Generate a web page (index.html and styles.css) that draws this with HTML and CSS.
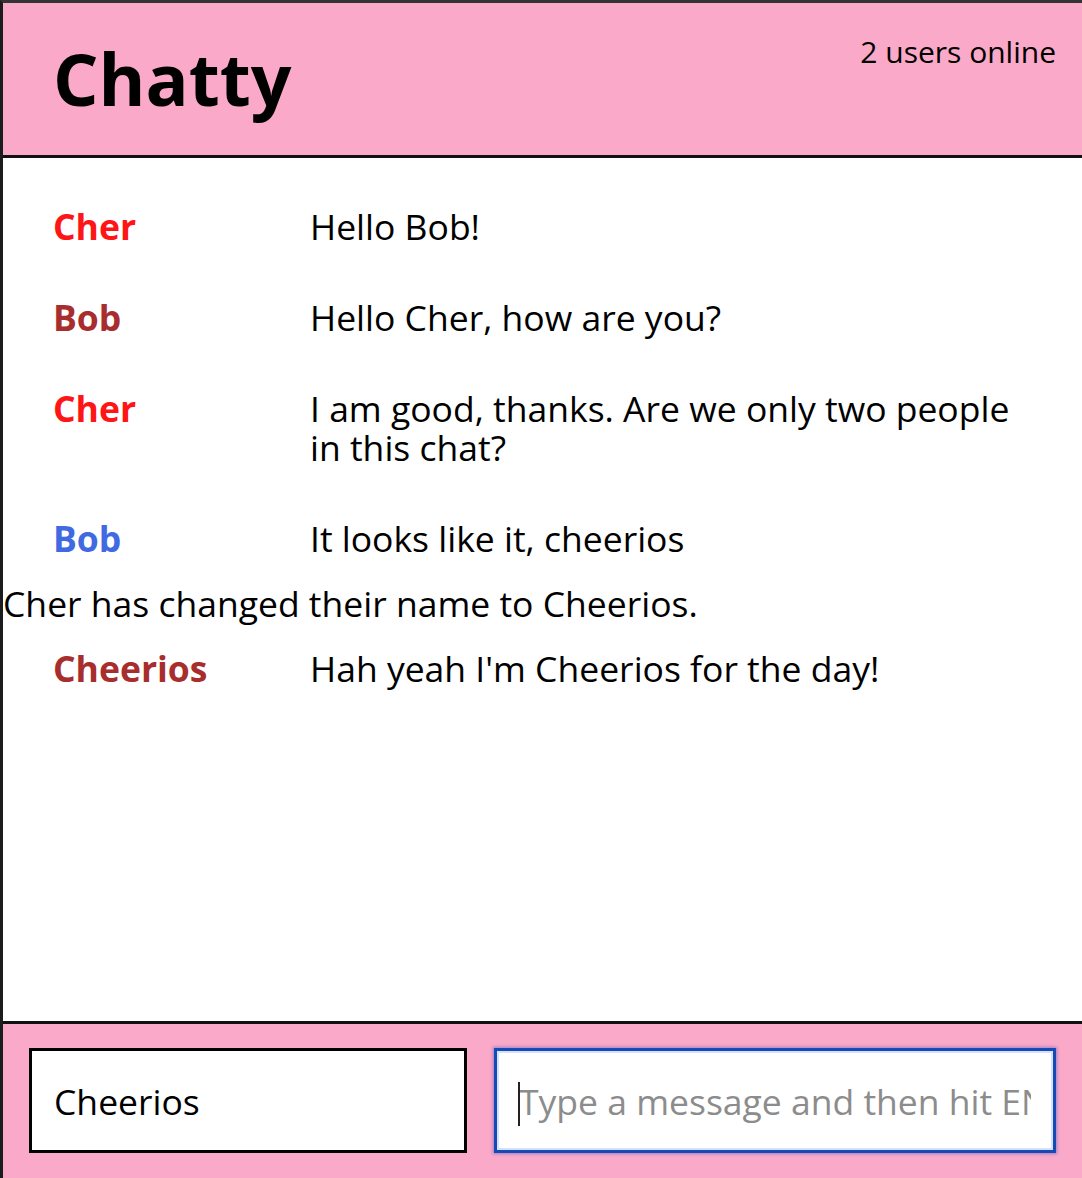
FILE: index.html
```html
<!DOCTYPE html>
<html lang="en">
<head>
<meta charset="utf-8">
<title>Chatty</title>
<link rel="stylesheet" href="styles.css">
</head>
<body>
<div class="app">
  <header class="navbar">
    <h1 class="brand">Chatty</h1>
    <span class="online">2 users online</span>
  </header>
  <main class="messages">
    <div class="message">
      <span class="username red">Cher</span>
      <span class="content">Hello Bob!</span>
    </div>
    <div class="message">
      <span class="username brown">Bob</span>
      <span class="content">Hello Cher, how are you?</span>
    </div>
    <div class="message">
      <span class="username red">Cher</span>
      <span class="content">I am good, thanks. Are we only two people in this chat?</span>
    </div>
    <div class="message">
      <span class="username blue">Bob</span>
      <span class="content">It looks like it, cheerios</span>
    </div>
    <div class="system">Cher has changed their name to Cheerios.</div>
    <div class="message">
      <span class="username brown">Cheerios</span>
      <span class="content">Hah yeah I'm Cheerios for the day!</span>
    </div>
  </main>
  <footer class="chatbar">
    <input class="chatbar-username" type="text" value="Cheerios">
    <span class="msg-wrap"><input class="chatbar-message" type="text" placeholder="Type a message and then hit ENTER"></span>
  </footer>
</div>
</body>
</html>
```
FILE: styles.css
```css
* { box-sizing: border-box; }
html, body { margin: 0; padding: 0; background: #fff; }
body { font-family: "Open Sans", "Liberation Sans", sans-serif; color: #000; }

.app {
  height: 1178px;
  display: flex;
  flex-direction: column;
  border-top: 3px solid #333;
  border-left: 3px solid #1c1c1c;
}

.navbar {
  height: 155px;
  flex: 0 0 155px;
  background: #faa9c9;
  border-bottom: 3px solid #111;
  display: flex;
  justify-content: space-between;
  align-items: center;
  padding: 0 26px 0 50px;
}
.brand {
  margin: 0;
  font-size: 71.5px;
  line-height: 74px;
  font-weight: 700;
}
.online {
  align-self: flex-start;
  padding-top: 29px;
  font-size: 30px;
  line-height: 1.362;
}

.messages {
  flex: 1;
  padding-top: 23px;
  overflow: hidden;
}
.message {
  display: flex;
  padding: 26px 45px 26px 50px;
  font-size: 35.5px;
  line-height: 39px;
}
.username {
  flex: 0 0 257px;
  font-weight: 700;
}
.content { flex: 1; }
.red { color: #fe1515; }
.brown { color: #a82d2d; }
.blue { color: #4169e1; }
.system {
  font-size: 35.5px;
  line-height: 39px;
}

.chatbar {
  flex: 0 0 157px;
  background: #faa9c9;
  border-top: 3px solid #111;
  display: flex;
  gap: 27px;
  padding: 24px 26px 25px 26px;
}
.chatbar input {
  height: 105px;
  font-family: "Open Sans", "Liberation Sans", sans-serif;
  font-size: 35.5px;
  padding: 0 22px;
  background: #fff;
  color: #000;
  outline: none;
  margin: 0;
}
.chatbar-username {
  flex: 0 0 438px;
  width: 438px;
  border: 3px solid #000;
}
.msg-wrap {
  flex: 1;
  position: relative;
  display: flex;
}
.msg-wrap::before {
  content: "";
  position: absolute;
  left: 24px;
  top: 34px;
  width: 2px;
  height: 44px;
  background: #222;
}
.chatbar-message {
  flex: 1;
  width: 100%;
  border: 3px solid #1749b5;
  box-shadow: inset 0 0 0 2px #d3e2fa, 0 0 3px 1px rgba(40, 80, 200, 0.45);
}
.chatbar-message::placeholder { color: #8c8c8c; }
```
